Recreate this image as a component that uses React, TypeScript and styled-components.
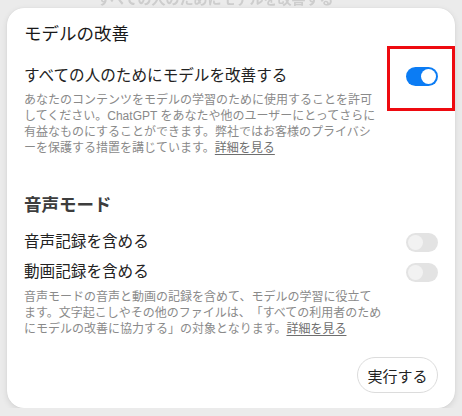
import React from 'react';
import styled, { createGlobalStyle } from 'styled-components';

const GlobalStyle = createGlobalStyle`
  html, body {
    margin: 0;
    padding: 0;
    background: #ebebeb;
  }
  body {
    font-family: 'Liberation Sans', 'Noto Sans CJK JP', sans-serif;
    color: #1d1d1d;
    text-spacing-trim: space-all;
  }
`;

interface IToggle {
  on: boolean;
}

const Toggle = ({ on }: IToggle) => (
  <Track $on={on}>
    <Knob $on={on} />
  </Track>
);

const App = () => {
  return (
    <>
      <GlobalStyle />
      <Backdrop>
        <BackdropText>すべての人のためにモデルを改善する</BackdropText>
      </Backdrop>
      <Card>
        <SectionTitle>モデルの改善</SectionTitle>
        <SettingRow $mt={18}>
          <SettingLabel>すべての人のためにモデルを改善する</SettingLabel>
          <Toggle on />
        </SettingRow>
        <Highlight />
        <Description $mt={4}>
          あなたのコンテンツをモデルの学習のために使用することを許可
          <br />
          してください。ChatGPT をあなたや他のユーザーにとってさらに
          <br />
          有益なものにすることができます。弊社ではお客様のプライバシ
          <br />
          ーを保護する措置を講じています。<MoreLink>詳細を見る</MoreLink>
        </Description>

        <VoiceTitle>音声モード</VoiceTitle>
        <SettingRow $mt={13}>
          <SettingLabel>音声記録を含める</SettingLabel>
          <Toggle on={false} />
        </SettingRow>
        <SettingRow $mt={6}>
          <SettingLabel>動画記録を含める</SettingLabel>
          <Toggle on={false} />
        </SettingRow>
        <Description $mt={5}>
          音声モードの音声と動画の記録を含めて、モデルの学習に役立て
          <br />
          ます。文字起こしやその他のファイルは、「すべての利用者のため
          <br />
          にモデルの改善に協力する」の対象となります。<MoreLink>詳細を見る</MoreLink>
        </Description>

        <Footer>
          <RunButton type='button'>実行する</RunButton>
        </Footer>
      </Card>
    </>
  );
};

export default App;

const Backdrop = styled.div`
  height: 8px;
  overflow: hidden;
  padding-left: 97px;
`;

const BackdropText = styled.div`
  margin-top: -9px;
  font-size: 14px;
  line-height: 16px;
  font-weight: 700;
  color: #cdcdcd;
  filter: blur(0.6px);
  white-space: nowrap;
`;

const Card = styled.div`
  position: relative;
  box-sizing: border-box;
  width: 448px;
  height: 400px;
  margin-left: 7px;
  padding: 14px 17px 15px;
  background: #ffffff;
  border-radius: 17px;
  box-shadow: 0 2px 6px rgba(0, 0, 0, 0.1), 0 0 1px rgba(0, 0, 0, 0.12);
  display: flex;
  flex-direction: column;
`;

const SectionTitle = styled.h2`
  margin: 0;
  font-size: 17.5px;
  line-height: 24px;
  font-weight: 400;
  color: #1a1a1a;
`;

const VoiceTitle = styled.h2`
  margin: 37px 0 0;
  font-size: 17.5px;
  line-height: 24px;
  font-weight: 700;
  color: #3d3d3d;
`;

const SettingRow = styled.div<{ $mt: number }>`
  display: flex;
  align-items: center;
  justify-content: space-between;
  height: 24px;
  margin-top: ${(p) => p.$mt}px;
`;

const SettingLabel = styled.span`
  font-size: 15.6px;
  line-height: 24px;
  color: #222222;
`;

const Track = styled.span<{ $on: boolean }>`
  box-sizing: border-box;
  display: flex;
  align-items: center;
  justify-content: ${(p) => (p.$on ? 'flex-end' : 'flex-start')};
  width: 32px;
  height: 19px;
  padding: 0 2px;
  border-radius: 10px;
  background: ${(p) => (p.$on ? '#0b7cf4' : '#e3e3e3')};
`;

const Knob = styled.span<{ $on: boolean }>`
  width: 15px;
  height: 15px;
  border-radius: 50%;
  background: ${(p) => (p.$on ? '#ffffff' : '#f2f2f2')};
`;

const Highlight = styled.div`
  position: absolute;
  left: 380px;
  top: 38px;
  width: 68px;
  height: 65px;
  box-sizing: border-box;
  border: 3px solid #ee0a10;
  pointer-events: none;
`;

const Description = styled.p<{ $mt: number }>`
  margin: ${(p) => p.$mt}px 0 0;
  font-size: 12px;
  line-height: 16px;
  color: #8a8a8a;
  white-space: nowrap;
`;

const MoreLink = styled.a`
  color: #6e6e6e;
  text-decoration: underline;
  text-underline-offset: 2px;
  cursor: pointer;
`;

const Footer = styled.div`
  display: flex;
  justify-content: flex-end;
  margin-top: 20px;
`;

const RunButton = styled.button`
  box-sizing: border-box;
  height: 36px;
  width: 81px;
  padding: 0;
  border: 1px solid #dcdcdc;
  border-radius: 18px;
  background: #ffffff;
  font-family: 'Liberation Sans', 'Noto Sans CJK JP', sans-serif;
  font-size: 15px;
  color: #222222;
  cursor: pointer;
`;
